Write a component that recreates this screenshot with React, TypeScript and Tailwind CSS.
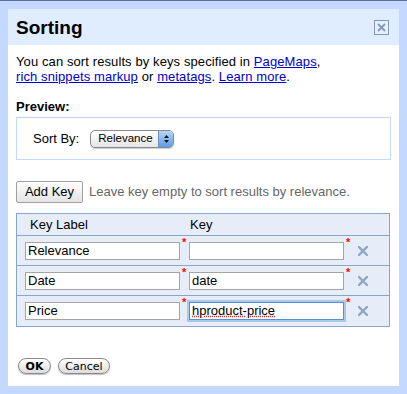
const rows = [
  { label: "Relevance", key: "" },
  { label: "Date", key: "date" },
  { label: "Price", key: "hproduct-price", focused: true },
]

function Star() {
  return <span className="w-[9px] self-start pt-[1px] pl-[2px] text-[11px] leading-none font-bold text-[#ff0000]">*</span>
}

function DeleteX() {
  return (
    <svg width="10" height="10" viewBox="0 0 10 10" className="ml-[5px]">
      <path d="M1 1 L9 9 M9 1 L1 9" stroke="#8fa7c6" strokeWidth="2.4" strokeLinecap="square" />
    </svg>
  )
}

export default function App() {
  return (
    <div className="min-h-screen bg-[#c3d9ff] border-t border-[#5c7394] pt-[8px] pb-[9px] pl-[8px] pr-[8px] font-['Liberation_Sans',Arial,sans-serif] text-[13px] text-black">
      <div className="w-[391px] bg-white">
        {/* Title bar */}
        <div className="h-[36px] bg-[#e0ecff] flex items-center justify-between pl-[8px] pr-[10px]">
          <div className="text-[19px] font-bold leading-none pt-[1px]">Sorting</div>
          <div className="w-[15px] h-[15px] border border-[#7f99bc] bg-[#e8f0ff] flex items-center justify-center">
            <svg width="9" height="9" viewBox="0 0 9 9">
              <path d="M1 1 L8 8 M8 1 L1 8" stroke="#7f99bc" strokeWidth="1.8" />
            </svg>
          </div>
        </div>

        <div className="px-[8px] pt-[9px] pb-[12px]">
          <p className="leading-[15px] tracking-[0.1px]">
            You can sort results by keys specified in <a className="text-[#0000cc] underline">PageMaps</a>,<br />
            <a className="text-[#0000cc] underline">rich snippets markup</a> or <a className="text-[#0000cc] underline">metatags</a>. <a className="text-[#0000cc] underline">Learn more</a>.
          </p>

          <div className="mt-[15px] font-bold leading-[16px]">Preview:</div>
          <div className="mt-[2px] h-[43px] border border-[#c3d9ff] flex items-center pl-[16px]">
            <span>Sort By:</span>
            <div className="ml-[11px] w-[84px] h-[18px] rounded-[5px] border border-[#8a8a8a] bg-gradient-to-b from-white to-[#e6e6e6] flex items-center shadow-[0_1px_1px_rgba(0,0,0,0.2)] overflow-hidden">
              <span className="flex-1 pl-[7px] leading-none text-[11.5px]">Relevance</span>
              <div className="w-[15px] h-full bg-gradient-to-b from-[#b8d4f5] to-[#5d9ce8] border-l border-[#6a8fc0] flex flex-col items-center justify-center gap-[2px]">
                <svg width="5" height="3" viewBox="0 0 5 3"><path d="M0 3 L2.5 0 L5 3 Z" fill="#111" /></svg>
                <svg width="5" height="3" viewBox="0 0 5 3"><path d="M0 0 L2.5 3 L5 0 Z" fill="#111" /></svg>
              </div>
            </div>
          </div>

          <div className="mt-[21px] flex items-center">
            <button className="h-[22px] w-[67px] border border-[#a0a0a0] rounded-[2px] bg-gradient-to-b from-white to-[#e4e4e4] text-[13px]">Add Key</button>
            <span className="ml-[6px] text-[#666666]">Leave key empty to sort results by relevance.</span>
          </div>

          <div className="mt-[10px] w-[374px] border border-[#88a6cc] bg-[#e6edf9]">
            <div className="h-[22px] flex items-center border-b border-[#88a6cc]">
              <span className="pl-[13px] w-[173px]">Key Label</span>
              <span>Key</span>
            </div>
            {rows.map((r, i) => (
              <div key={i} className={`h-[30px] flex items-center pl-[8px] ${i < rows.length - 1 ? "border-b border-[#88a6cc]" : ""}`}>
                <div className="w-[155px] h-[18px] border border-[#a5a5a5] bg-white pl-[2px] leading-[16px]">{r.label}</div>
                <Star />
                <div className={`w-[155px] h-[18px] bg-white pl-[2px] leading-[16px] ${r.focused ? "border border-[#5b8fc9] shadow-[0_0_0_2px_#a9c8ec]" : "border border-[#a5a5a5]"}`}>
                  {r.focused ? <span className="underline decoration-dotted decoration-[#e03030]">{r.key}</span> : r.key}
                </div>
                <Star />
                <DeleteX />
              </div>
            ))}
          </div>

          <div className="mt-[31px] flex items-center gap-[7px] pl-[2px]">
            <button className="h-[16px] w-[33px] rounded-full border border-[#8a8a8a] bg-gradient-to-b from-white to-[#dcdcdc] text-[11px] font-bold leading-none font-['DejaVu_Sans',sans-serif] shadow-[0_1px_1px_rgba(0,0,0,0.25)]">OK</button>
            <button className="h-[16px] w-[52px] rounded-full border border-[#8a8a8a] bg-gradient-to-b from-white to-[#dcdcdc] text-[11px] leading-none font-['DejaVu_Sans',sans-serif] shadow-[0_1px_1px_rgba(0,0,0,0.25)]">Cancel</button>
          </div>
        </div>
      </div>
    </div>
  )
}
